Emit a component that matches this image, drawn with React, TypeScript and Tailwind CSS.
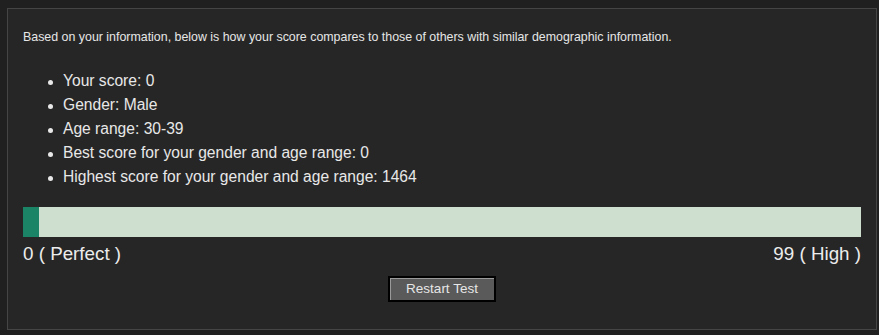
export default function App() {
  const items = [
    "Your score: 0",
    "Gender: Male",
    "Age range: 30-39",
    "Best score for your gender and age range: 0",
    "Highest score for your gender and age range: 1464",
  ];
  return (
    <div className="w-[879px] h-[335px] bg-[#202020] pt-[8px] pl-[7px] font-['Liberation_Sans',Arial,sans-serif]">
      <div className="w-[870px] h-[322px] border border-[#454545] bg-[#262626] px-[15px] pt-[21px]">
        <p className="text-[12.4px] leading-[14px] text-[#e6e6e6] whitespace-nowrap">
          Based on your information, below is how your score compares to those of others with similar demographic information.
        </p>
        <ul className="mt-[25px] pl-[40px] flex flex-col">
          {items.map((t) => (
            <li key={t} className="flex items-center h-[24px] text-[15.6px] text-[#e8e8e8]">
              <span className="w-[5px] h-[5px] rounded-full bg-[#e8e8e8] mr-[10px] ml-[-15px] mt-[2px]" />
              {t}
            </li>
          ))}
        </ul>
        <div className="mt-[18px] h-[30px] w-[838px] bg-[#cfdfcf] flex">
          <div className="w-[16px] h-full bg-[#1c8466]" />
        </div>
        <div className="flex justify-between w-[838px] mt-[6px] text-[18.8px] leading-[22px] text-[#ececec]">
          <span>0 ( Perfect )</span>
          <span>99 ( High )</span>
        </div>
        <div className="flex justify-center w-[838px] mt-[11px]">
          <button className="w-[108px] h-[26px] bg-[#5a5a5a] border-2 border-black text-[13.5px] leading-[16px] text-[#e6e6e6] shadow-[inset_1px_1px_0_#9a9a9a]">
            Restart Test
          </button>
        </div>
      </div>
    </div>
  );
}
